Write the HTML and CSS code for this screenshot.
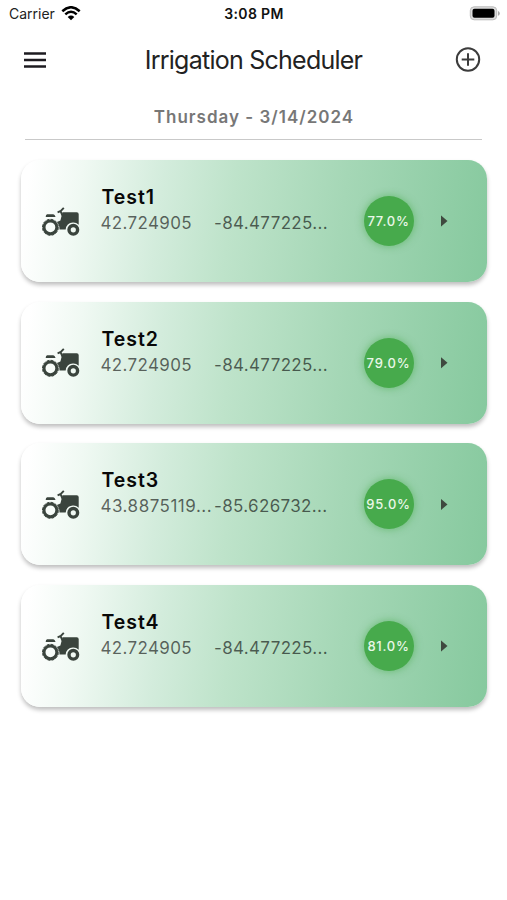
FILE: index.html
```html
<!DOCTYPE html>
<html lang="en">
<head>
<meta charset="utf-8">
<title>Irrigation Scheduler</title>
<link rel="stylesheet" href="styles.css">
</head>
<body>
<svg class="defs" width="0" height="0" aria-hidden="true">
  <symbol id="tractor" viewBox="0 0 38 30">
    <g fill="none" stroke="currentColor">
      <circle cx="8.400" cy="20.300" r="6.400" stroke-width="3"/>
      <circle cx="8.400" cy="20.300" r="8" stroke-width="1" stroke-dasharray="2.900 1.290"/>
      <circle cx="31.300" cy="22.800" r="4.300" stroke-width="3.400"/>
      <path d="M15.600 5.300 18.800 4 21.800.9M18.500 4.200 20.500 8.500" stroke-width="1.900"/>
    </g>
    <path fill="currentColor" d="M5 7.200h6.300q1.500 0 2.300 2.700H3.700q0-1.800 1.300-2.700zM20.500 5.300h14.200q2 0 2 2v10.500q-2.500-2.500-5.800-2.300-6.500.5-7.200 6.900h-6.200q0-4.800-2.600-7.300l3.500-1.700z"/>
  </symbol>
</svg>
<header class="status">
  <span class="carrier">Carrier</span>
  <svg class="wifi" width="20" height="15" viewBox="0 0 20 15"><g fill="none" stroke="#000" stroke-width="2.500"><path d="M1.300 5.200Q10-2.700 18.700 5.200"/><path d="M4.300 8.400Q10 3.200 15.700 8.400"/></g><path d="M6.700 10.900Q10 8 13.300 10.900L10 14.300z"/></svg>
  <span class="time">3:08 PM</span>
  <svg class="battery" width="31" height="15" viewBox="0 0 31 15"><rect x="1.300" y=".8" width="26.400" height="13" rx="3.800" fill="#ddd" stroke="#bbb"/><rect x="3.500" y="2.800" width="22" height="9" rx="2"/><path d="M29 5v4.800q1.800-.6 1.800-2.400T29 5" fill="#aaa"/></svg>
</header>
<nav class="bar">
  <svg class="menu" width="22" height="16" viewBox="0 0 22 16"><path d="M0 1.500h22M0 8h22M0 14.500h22" stroke="#1d1b20" stroke-width="2.500"/></svg>
  <h1>Irrigation Scheduler</h1>
  <svg class="add" width="26" height="26" viewBox="0 0 26 26"><g fill="none" stroke="#3c3c3c" stroke-width="2"><circle cx="13" cy="12.500" r="11.200"/><path d="M13 6.200v12.600M6.700 12.500h12.600"/></g></svg>
</nav>
<div class="date">Thursday - 3/14/2024</div>
<main>
  <article class="card">
    <svg class="tractor"><use href="#tractor"/></svg>
    <div class="info"><h2>Test1</h2><div class="coords"><span>42.724905</span><span>-84.477225...</span></div></div>
    <div class="level">77.0%</div><i class="arrow"></i>
  </article>
  <article class="card">
    <svg class="tractor"><use href="#tractor"/></svg>
    <div class="info"><h2>Test2</h2><div class="coords"><span>42.724905</span><span>-84.477225...</span></div></div>
    <div class="level">79.0%</div><i class="arrow"></i>
  </article>
  <article class="card">
    <svg class="tractor"><use href="#tractor"/></svg>
    <div class="info"><h2>Test3</h2><div class="coords"><span class="wide">43.8875119...</span><span>-85.626732...</span></div></div>
    <div class="level">95.0%</div><i class="arrow"></i>
  </article>
  <article class="card">
    <svg class="tractor"><use href="#tractor"/></svg>
    <div class="info"><h2>Test4</h2><div class="coords"><span>42.724905</span><span>-84.477225...</span></div></div>
    <div class="level">81.0%</div><i class="arrow"></i>
  </article>
</main>
</body>
</html>
```
FILE: styles.css
```css
* { box-sizing: border-box; }
body { margin: 0; background: #fff; font-family: Inter, "Liberation Sans", sans-serif; height: 900px; overflow: hidden; }
.defs { display: block; height: 0; }
h1, h2 { margin: 0; }
.status { display: grid; grid-template-columns: 52px 101px 184px 1fr; height: 28px; padding: 0 7px 0 9px; align-items: center; line-height: 28px; color: #222; }
.carrier { font-size: 14px; }
.wifi { margin-top: -2px; }
.time { text-align: center; font-weight: 600; font-size: 14px; letter-spacing: .35px; color: #111; }
.battery { justify-self: end; margin-top: -2px; }
.bar { height: 63px; display: grid; grid-template-columns: 80px 1fr 80px; align-items: center; }
.menu { margin-left: 24px; }
.bar h1 { text-align: center; font-weight: 400; font-size: 25px; letter-spacing: -.75px; color: #222; white-space: nowrap; }
.add { justify-self: end; margin-right: 26px; }
.date { margin: 0 25px; height: 49px; padding-top: 12px; border-bottom: 1px solid #c9c9c9; text-align: center; font-weight: 600; font-size: 17px; line-height: 28px; letter-spacing: 1px; text-indent: 1px; color: #777; }
main { display: grid; gap: 19.700px; padding: 20px 20px 0 20.500px; }
.card { height: 122px; border-radius: 19px; display: grid; grid-template-columns: 81px 262px 50px 1fr; align-items: center; background: linear-gradient(98deg, #fff 2%, #f0f9f3 13%, #d3ecdc 30%, #bee3ca 45%, #a5d7b6 68%, #86c99e 100%); box-shadow: 0 3px 4px rgba(0,0,0,.25); }
.tractor { width: 38px; height: 30px; margin: 1px 0 0 21.500px; color: #3a443d; }
.info { align-self: start; padding-top: 25px; }
.info h2 { font-size: 19.500px; line-height: 24px; font-weight: 600; letter-spacing: .95px; color: #080808; }
.coords { display: grid; grid-template-columns: 113.500px 1fr; font-size: 17px; line-height: 29px; letter-spacing: .35px; margin-left: -1px; color: rgba(0,0,0,.6); white-space: nowrap; }
.wide { letter-spacing: .5px; }
.level { width: 50px; height: 50px; border-radius: 50%; background: #47aa4c; color: #eaf7e8; display: flex; align-items: center; justify-content: center; font-size: 13px; font-weight: 500; letter-spacing: .75px; box-shadow: 0 0 7px 1px rgba(71,170,76,.5); }
.arrow { margin-left: 27px; width: 7px; height: 12px; background: #3f493f; clip-path: polygon(0 0, 100% 50%, 0 100%); }
```
